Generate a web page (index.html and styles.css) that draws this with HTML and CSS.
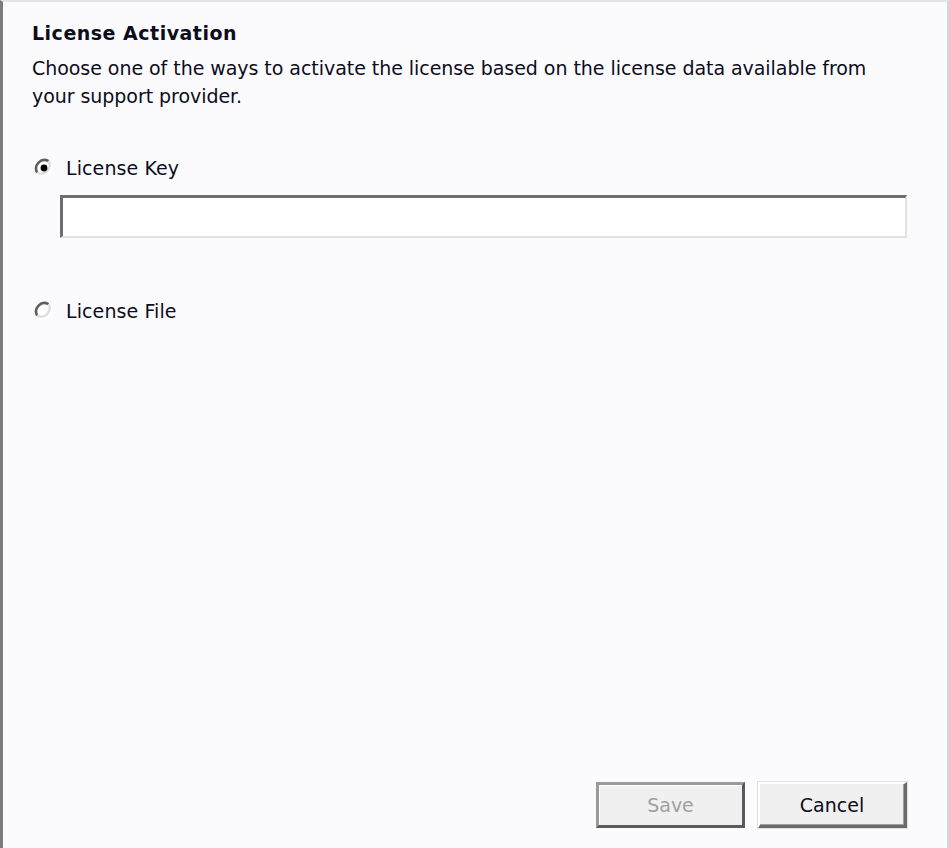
FILE: index.html
```html
<!DOCTYPE html>
<html>
<head>
<meta charset="utf-8">
<link rel="stylesheet" href="styles.css">
</head>
<body>
<div class="dialog">
  <div class="content">
    <h1 class="title">License Activation</h1>
    <p class="desc">Choose one of the ways to activate the license based on the license data available from your support provider.</p>
    <div class="option option-key">
      <span class="radio checked">
        <svg width="22" height="22" viewBox="0 0 22 22">
          <circle cx="11" cy="11" r="8.5" fill="#ffffff"/>
          <path d="M4.2 15.5 A8.3 8.3 0 0 1 15.5 4.2" fill="none" stroke="#5e5e5e" stroke-width="2.6"/>
          <path d="M15.5 4.2 A8.3 8.3 0 0 1 4.2 15.5" fill="none" stroke="#dedede" stroke-width="2.4"/>
          <circle cx="11" cy="11" r="3.4" fill="#000000"/>
        </svg>
      </span>
      <span class="label">License Key</span>
    </div>
    <div class="field"><input class="input" type="text"></div>
    <div class="option option-file">
      <span class="radio">
        <svg width="22" height="22" viewBox="0 0 22 22">
          <circle cx="11" cy="11" r="8.5" fill="#ffffff"/>
          <path d="M4.2 15.5 A8.3 8.3 0 0 1 15.5 4.2" fill="none" stroke="#5e5e5e" stroke-width="2.6"/>
          <path d="M15.5 4.2 A8.3 8.3 0 0 1 4.2 15.5" fill="none" stroke="#dedede" stroke-width="2.4"/>
        </svg>
      </span>
      <span class="label">License File</span>
    </div>
  </div>
  <div class="buttons">
    <button class="btn btn-save" disabled>Save</button>
    <button class="btn btn-cancel">Cancel</button>
  </div>
</div>
</body>
</html>
```
FILE: styles.css
```css
html, body {
  margin: 0;
  padding: 0;
  background: #fbfbfd;
}
.dialog {
  box-sizing: border-box;
  width: 950px;
  height: 848px;
  border-left: 3px solid #7c7c7c;
  border-top: 2px solid #e4e4e6;
  border-right: 3px solid #d4d4d6;
  background: #fbfbfd;
  padding: 0 40px 20px 29px;
  display: flex;
  flex-direction: column;
  font-family: "DejaVu Sans", Verdana, sans-serif;
  color: #0c0c1c;
}
.content {
  flex: 1;
}
.title {
  margin: 18px 0 0 0;
  font-size: 19px;
  font-weight: bold;
  line-height: 26px;
  letter-spacing: 0.5px;
}
.desc {
  margin: 8px 0 0 0;
  font-size: 19px;
  line-height: 28px;
  letter-spacing: -0.05px;
  width: 870px;
}
.option {
  display: flex;
  align-items: center;
  gap: 11px;
  height: 28px;
}
.option-key {
  margin-top: 44px;
}
.option-file {
  margin-top: 59px;
}
.radio {
  display: flex;
  width: 22px;
  height: 22px;
  margin-left: 1px;
}
.label {
  font-size: 19px;
  letter-spacing: 0.1px;
}
.field {
  margin-top: 13px;
  padding-left: 28px;
}
.input {
  box-sizing: border-box;
  display: block;
  width: 847px;
  height: 43px;
  margin: 0;
  border-style: solid;
  border-width: 3px 2px 2px 3px;
  border-color: #6e6e6e #e2e2e2 #e2e2e2 #6e6e6e;
  background: #ffffff;
  outline: none;
}
.buttons {
  display: flex;
  justify-content: flex-end;
  gap: 13px;
}
.btn {
  box-sizing: border-box;
  width: 149px;
  height: 46px;
  font-family: "DejaVu Sans", Verdana, sans-serif;
  font-size: 19px;
  letter-spacing: 0;
  background: #f0f0f0;
  padding: 0;
  margin: 0;
}
.btn-save {
  color: #a0a0a0;
  border-style: solid;
  border-width: 3px;
  border-color: #9a9a9a #5a5a5a #5a5a5a #9a9a9a;
  box-shadow: inset 1px 1px 0 #ffffff;
}
.btn-cancel {
  color: #0c0c1c;
  border-style: solid;
  border-width: 2px 3px 3px 2px;
  border-color: #ffffff #6a6a6a #6a6a6a #ffffff;
  box-shadow: inset -1px -1px 0 #a0a0a0, 0 0 0 1px #e0e0e0;
}
```
